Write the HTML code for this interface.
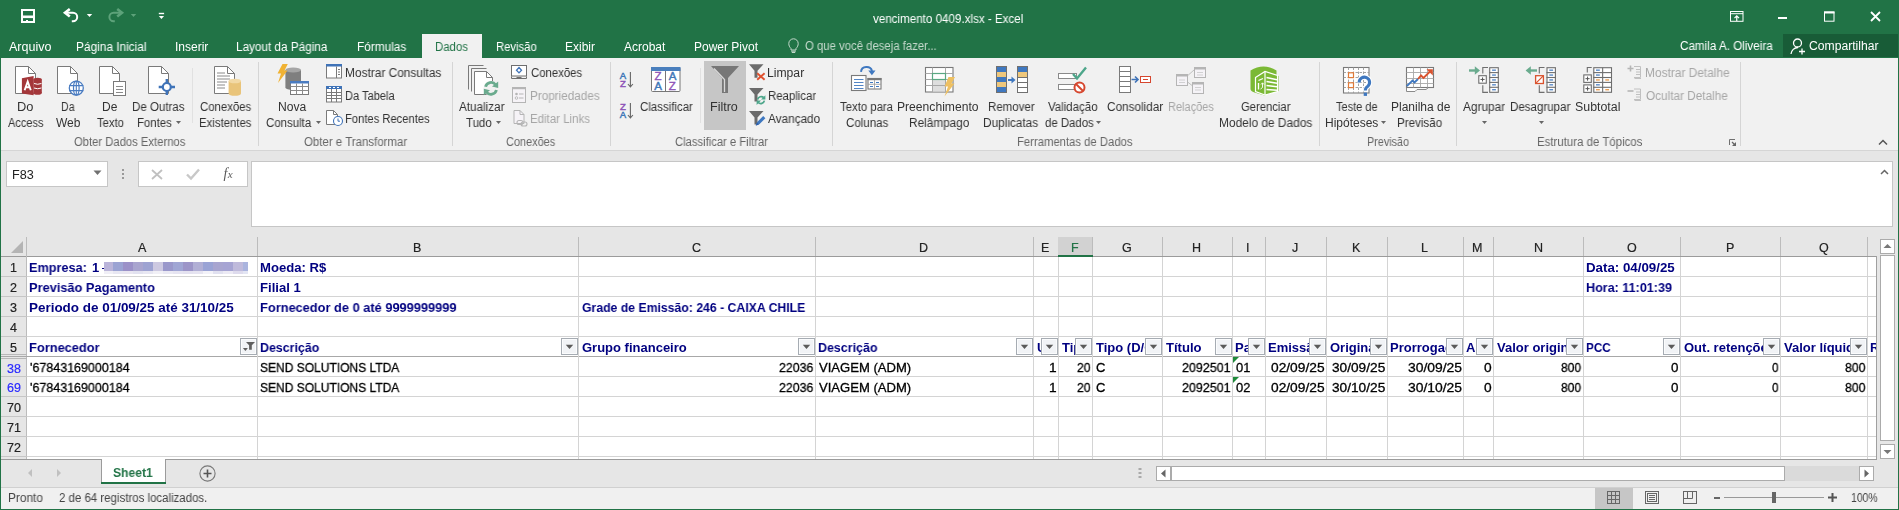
<!DOCTYPE html><html><head><meta charset="utf-8"><style>
html,body{margin:0;padding:0;}
body{width:1899px;height:510px;position:relative;overflow:hidden;background:#e6e6e6;font-family:'Liberation Sans', sans-serif;-webkit-font-smoothing:antialiased;}
.a{position:absolute;}
.t{white-space:pre;will-change:transform;}
svg{overflow:visible;}
</style></head><body><div class="a" style="left:0px;top:0px;width:1899px;height:58px;background:#217346;"></div>
<div class="a" style="left:422px;top:34px;width:60px;height:24px;background:#f1f1f1;"></div>
<div class="a" style="left:1783px;top:34px;width:115px;height:23px;background:#185c37;"></div>
<div class="a t" style="left:873.00px;top:-1px;line-height:40px;font-size:12px;font-weight:400;color:#fff;transform:scaleX(0.9671);transform-origin:0 0;">vencimento 0409.xlsx - Excel</div>
<div class="a t" style="left:9.00px;top:27px;line-height:40px;font-size:12px;font-weight:400;color:#fff;transform:scaleX(1.0437);transform-origin:0 0;">Arquivo</div>
<div class="a t" style="left:76.00px;top:27px;line-height:40px;font-size:12px;font-weight:400;color:#fff;transform:scaleX(0.9886);transform-origin:0 0;">Página Inicial</div>
<div class="a t" style="left:175.00px;top:27px;line-height:40px;font-size:12px;font-weight:400;color:#fff;transform:scaleX(0.9875);transform-origin:0 0;">Inserir</div>
<div class="a t" style="left:236.00px;top:27px;line-height:40px;font-size:12px;font-weight:400;color:#fff;transform:scaleX(0.9785);transform-origin:0 0;">Layout da Página</div>
<div class="a t" style="left:357.00px;top:27px;line-height:40px;font-size:12px;font-weight:400;color:#fff;transform:scaleX(0.9857);transform-origin:0 0;">Fórmulas</div>
<div class="a t" style="left:496.00px;top:27px;line-height:40px;font-size:12px;font-weight:400;color:#fff;transform:scaleX(0.9381);transform-origin:0 0;">Revisão</div>
<div class="a t" style="left:565.00px;top:27px;line-height:40px;font-size:12px;font-weight:400;color:#fff;transform:scaleX(0.9897);transform-origin:0 0;">Exibir</div>
<div class="a t" style="left:624.00px;top:27px;line-height:40px;font-size:12px;font-weight:400;color:#fff;">Acrobat</div>
<div class="a t" style="left:694.00px;top:27px;line-height:40px;font-size:12px;font-weight:400;color:#fff;transform:scaleX(0.9952);transform-origin:0 0;">Power Pivot</div>
<div class="a t" style="left:435.00px;top:27px;line-height:40px;font-size:12px;font-weight:400;color:#217346;transform:scaleX(0.9500);transform-origin:0 0;">Dados</div>
<div class="a t" style="left:805.00px;top:26px;line-height:40px;font-size:12px;font-weight:400;color:#c5d9cc;transform:scaleX(0.9446);transform-origin:0 0;">O que você deseja fazer...</div>
<div class="a t" style="left:1680.00px;top:26px;line-height:40px;font-size:12px;font-weight:400;color:#fff;transform:scaleX(0.9719);transform-origin:0 0;">Camila A. Oliveira</div>
<div class="a t" style="left:1809.00px;top:26px;line-height:40px;font-size:12px;font-weight:400;color:#fff;transform:scaleX(1.0116);transform-origin:0 0;">Compartilhar</div>
<div class="a" style="left:0px;top:58px;width:1899px;height:92px;background:#f1f1f1;"></div>
<div class="a" style="left:0px;top:150px;width:1899px;height:1px;background:#d5d5d5;"></div>
<div class="a" style="left:258px;top:62px;width:1px;height:84px;background:#d5d5d5;"></div>
<div class="a" style="left:452px;top:62px;width:1px;height:84px;background:#d5d5d5;"></div>
<div class="a" style="left:610px;top:62px;width:1px;height:84px;background:#d5d5d5;"></div>
<div class="a" style="left:832px;top:62px;width:1px;height:84px;background:#d5d5d5;"></div>
<div class="a" style="left:1319px;top:62px;width:1px;height:84px;background:#d5d5d5;"></div>
<div class="a" style="left:1456px;top:62px;width:1px;height:84px;background:#d5d5d5;"></div>
<div class="a" style="left:1740px;top:62px;width:1px;height:84px;background:#d5d5d5;"></div>
<div class="a" style="left:192px;top:68px;width:1px;height:55px;background:#e1e1e1;"></div>
<div class="a" style="left:700px;top:68px;width:1px;height:55px;background:#e1e1e1;"></div>
<svg class="a" style="left:21px;top:9px;" width="14" height="14" viewBox="0 0 14 14"><rect x="1" y="1" width="12" height="12" fill="none" stroke="#fff" stroke-width="2"/><rect x="1" y="6.5" width="12" height="2.6" fill="#fff"/><rect x="5" y="11" width="2" height="2" fill="#fff"/></svg>
<svg class="a" style="left:58px;top:4px;" width="40" height="20" viewBox="0 0 40 20"><path d="M11.8 5L7 8.8L11.8 12.6" fill="none" stroke="#fff" stroke-width="2.6"/><path d="M8 8.8H15A4.2 4.2 0 0 1 15 17.2H13.8" fill="none" stroke="#fff" stroke-width="2"/><path d="M28.8 10H34.2L31.5 13Z" fill="#fff"/></svg>
<svg class="a" style="left:104px;top:4px;" width="40" height="20" viewBox="0 0 40 20"><path d="M13.2 5L18 8.8L13.2 12.6" fill="none" stroke="#5da27a" stroke-width="2.6"/><path d="M17 8.8H9.6A4.2 4.2 0 0 0 9.6 17.2H10.8" fill="none" stroke="#5da27a" stroke-width="2"/><path d="M26.8 10H32.2L29.5 13Z" fill="#5da27a"/></svg>
<svg class="a" style="left:158px;top:12px;" width="7" height="8" viewBox="0 0 7 8"><rect x="0.8" y="0.8" width="5.3" height="1.4" fill="#fff"/><path d="M0.8 4H6.1L3.45 7.1Z" fill="#fff"/></svg>
<svg class="a" style="left:1730px;top:11px;" width="14" height="11" viewBox="0 0 14 11"><rect x="0.5" y="0.5" width="12.5" height="9.8" fill="none" stroke="#fff"/><path d="M0.5 2.7H13" stroke="#fff"/><path d="M6.75 10V5M4.5 7.2L6.75 4.8L9 7.2" fill="none" stroke="#fff" stroke-width="1.2"/></svg>
<div class="a" style="left:1778px;top:17px;width:9px;height:1.5px;background:#fff;"></div>
<svg class="a" style="left:1824px;top:11px;" width="11" height="11" viewBox="0 0 11 11"><rect x="0.5" y="1" width="9.5" height="9.2" fill="none" stroke="#fff"/><path d="M0 1.5H10.5" stroke="#fff" stroke-width="2"/></svg>
<svg class="a" style="left:1870px;top:11px;" width="11" height="11" viewBox="0 0 11 11"><path d="M1 1L10 10M10 1L1 10" stroke="#fff" stroke-width="1.8"/></svg>
<svg class="a" style="left:788px;top:37.5px;" width="11" height="15" viewBox="0 0 11 15"><path d="M3 10.5C1.5 9 0.8 7.5 0.8 5.5A4.7 4.7 0 0 1 10.2 5.5C10.2 7.5 9.5 9 8 10.5V12H3Z" fill="none" stroke="#c5d9cc" stroke-width="1"/><path d="M3.2 13.2H7.8M3.8 14.5H7.2" stroke="#c5d9cc" stroke-width="1"/></svg>
<svg class="a" style="left:1790px;top:38px;" width="16" height="17" viewBox="0 0 16 17"><circle cx="7.5" cy="5" r="4" fill="none" stroke="#fff" stroke-width="1.3"/><path d="M1 16A7 7 0 0 1 8 9.5" fill="none" stroke="#fff" stroke-width="1.3"/><path d="M12 10.5V16.5M9 13.5H15" stroke="#fff" stroke-width="1.3"/></svg>
<svg class="a" style="left:13px;top:64px;" width="32" height="34" viewBox="0 0 32 34"><path d="M2.5 2.5H15.5L22.5 9.5V29.5H2.5Z" fill="#fff" stroke="#7a7a7a"/><path d="M15.5 2.5V9.5H22.5" fill="none" stroke="#7a7a7a"/><path d="M8.9 14.2L20.6 12.1V31.2L8.9 29.6Z" fill="#a4373a"/><ellipse cx="24.6" cy="15.5" rx="4.2" ry="1.8" fill="#a4373a"/><rect x="20.4" y="15.5" width="8.4" height="13.5" fill="#a4373a"/><ellipse cx="24.6" cy="29" rx="4.2" ry="1.8" fill="#a4373a"/><path d="M21 19.5Q24.6 21 28.4 19.5M21 24Q24.6 25.5 28.4 24" fill="none" stroke="#fff" stroke-width="1"/><path d="M11.6 26.2L14.7 17.5L17.8 26.2M12.8 23.3H16.6" fill="none" stroke="#fff" stroke-width="1.9"/></svg>
<svg class="a" style="left:55px;top:64px;" width="32" height="34" viewBox="0 0 32 34"><path d="M2.5 2.5H15.5L22.5 9.5V29.5H2.5Z" fill="#fff" stroke="#7a7a7a"/><path d="M15.5 2.5V9.5H22.5" fill="none" stroke="#7a7a7a"/><circle cx="21.3" cy="24.1" r="7" fill="#fff" stroke="#4a7cc1" stroke-width="1.3"/><ellipse cx="21.3" cy="24.1" rx="2.8" ry="7" fill="none" stroke="#4a7cc1" stroke-width="1.2"/><path d="M14.3 21.6H28.3M14.3 26.6H28.3M21.3 17V31" fill="none" stroke="#4a7cc1" stroke-width="1.1"/></svg>
<svg class="a" style="left:97px;top:64px;" width="32" height="34" viewBox="0 0 32 34"><path d="M2.5 2.5H15.5L22.5 9.5V29.5H2.5Z" fill="#fff" stroke="#7a7a7a"/><path d="M15.5 2.5V9.5H22.5" fill="none" stroke="#7a7a7a"/><rect x="16.5" y="17.5" width="12" height="14" fill="#fff" stroke="#7a7a7a"/><path d="M19 22.5H26M19 25.5H26M19 28.5H26" stroke="#8a8a8a" stroke-width="1"/></svg>
<svg class="a" style="left:146px;top:64px;" width="32" height="34" viewBox="0 0 32 34"><path d="M2.5 2.5H15.5L22.5 9.5V29.5H2.5Z" fill="#fff" stroke="#7a7a7a"/><path d="M15.5 2.5V9.5H22.5" fill="none" stroke="#7a7a7a"/><circle cx="20.8" cy="23" r="4" fill="#fff" stroke="#3f73b8" stroke-width="2.2"/><path d="M12.7 23H16.8M24.8 23H29M20.8 15V19M20.8 27V31" stroke="#3f73b8" stroke-width="2.4"/></svg>
<svg class="a" style="left:212px;top:64px;" width="32" height="34" viewBox="0 0 32 34"><path d="M2.5 2.5H15.5L22.5 9.5V29.5H2.5Z" fill="#fff" stroke="#7a7a7a"/><path d="M15.5 2.5V9.5H22.5" fill="none" stroke="#7a7a7a"/><path d="M5 9H13M5 12H18M5 15H18M5 18H15M5 21H13M5 24H13" stroke="#8a8a8a" stroke-width="1"/><path d="M16.6 17V29.5A6.2 2.3 0 0 0 29 29.5V17Z" fill="#e9c47a"/><ellipse cx="22.8" cy="17" rx="6.2" ry="2.3" fill="#f2d9a5"/></svg>
<svg class="a" style="left:275px;top:63px;" width="34" height="34" viewBox="0 0 34 34"><path d="M10.4 7V24.5A7.8 2.6 0 0 0 26 24.5V7Z" fill="#7f7f7f"/><ellipse cx="18.2" cy="7" rx="7.8" ry="2.6" fill="#a6a6a6"/><path d="M7.5 1H12.8L9.5 7.5H12.5L3 20L6 10.5H2.5Z" fill="#f0b233"/><rect x="15.5" y="18.5" width="18" height="13" fill="#fff" stroke="#7a7a7a"/><rect x="15" y="18" width="19" height="2.5" fill="#4a7cc1"/><path d="M15.5 23.5H33.5M15.5 27.5H33.5M21.5 20.5V31.5M27.5 20.5V31.5" stroke="#8a8a8a" stroke-width="1"/></svg>
<svg class="a" style="left:466px;top:64px;" width="34" height="34" viewBox="0 0 34 34"><path d="M2.5 25.5V1.5H17.5" fill="none" stroke="#7a7a7a"/><path d="M5.5 27.5V4.5H20.5" fill="none" stroke="#7a7a7a"/><path d="M8.5 7.5H20.5L26.5 13.5V30.5H8.5Z" fill="#fff" stroke="#7a7a7a"/><path d="M20.5 7.5V13.5H26.5" fill="none" stroke="#7a7a7a"/><circle cx="25" cy="24.4" r="7.6" fill="#f1f1f1"/><path d="M19.6 22.8A5.6 5.6 0 0 1 29.6 20.8M30.4 26A5.6 5.6 0 0 1 20.4 28" fill="none" stroke="#6aab8e" stroke-width="2.8"/><path d="M32.2 17.6V24L26 22.6Z" fill="#6aab8e"/><path d="M17.8 31.2V24.8L24 26.2Z" fill="#6aab8e"/></svg>
<svg class="a" style="left:650px;top:66px;" width="32" height="27" viewBox="0 0 32 27"><rect x="1.5" y="1.5" width="28.5" height="24" rx="1" fill="#fff" stroke="#777"/><rect x="1" y="1" width="29.5" height="4" fill="#4a7fbd"/><path d="M15.5 5V25.5" stroke="#777"/><text x="8" y="13.8" font-size="11.5" font-family="Liberation Sans" text-anchor="middle" fill="#8e54b8" stroke="#8e54b8" stroke-width="0.45">Z</text><text x="8.2" y="23.7" font-size="11.5" font-family="Liberation Sans" text-anchor="middle" fill="#3f78b8" stroke="#3f78b8" stroke-width="0.45">A</text><text x="22.5" y="13.8" font-size="11.5" font-family="Liberation Sans" text-anchor="middle" fill="#3f78b8" stroke="#3f78b8" stroke-width="0.45">A</text><text x="22.3" y="23.7" font-size="11.5" font-family="Liberation Sans" text-anchor="middle" fill="#8e54b8" stroke="#8e54b8" stroke-width="0.45">Z</text></svg>
<svg class="a" style="left:619px;top:72px;" width="16" height="16" viewBox="0 0 16 16"><text x="4" y="6.8" font-size="9.6" font-family="Liberation Sans" text-anchor="middle" fill="#3f78b8" stroke="#3f78b8" stroke-width="0.45">A</text><text x="4" y="14.9" font-size="9.6" font-family="Liberation Sans" text-anchor="middle" fill="#8e54b8" stroke="#8e54b8" stroke-width="0.45">Z</text><path d="M11.4 0V14.5M8.9 12L11.4 14.8L13.9 12" fill="none" stroke="#666" stroke-width="1.1"/></svg>
<svg class="a" style="left:619px;top:103px;" width="16" height="16" viewBox="0 0 16 16"><text x="4" y="6.8" font-size="9.6" font-family="Liberation Sans" text-anchor="middle" fill="#8e54b8" stroke="#8e54b8" stroke-width="0.45">Z</text><text x="4" y="14.9" font-size="9.6" font-family="Liberation Sans" text-anchor="middle" fill="#3f78b8" stroke="#3f78b8" stroke-width="0.45">A</text><path d="M11.4 0V14.5M8.9 12L11.4 14.8L13.9 12" fill="none" stroke="#666" stroke-width="1.1"/></svg>
<div class="a" style="left:704px;top:61px;width:42px;height:69px;background:#c6c6c6;"></div>
<svg class="a" style="left:710px;top:65px;" width="30" height="29" viewBox="0 0 30 29"><path d="M1 1H29L18 13V28H12V13Z" fill="#777"/><path d="M4 3.5L14.5 14.5V27" fill="none" stroke="#d9d9d9" stroke-width="1.3"/></svg>
<svg class="a" style="left:749px;top:64px;" width="18" height="18" viewBox="0 0 18 18"><path d="M0 0.3H14.5L8.5 6.8V13.8H5.5V6.8Z" fill="#6b6b6b"/><path d="M8.2 9.2L15.6 15.8M15.6 9.2L8.2 15.8" stroke="#e0512f" stroke-width="1.9"/></svg>
<svg class="a" style="left:749px;top:88px;" width="18" height="18" viewBox="0 0 18 18"><path d="M0 0H14.5L8.5 6.5V13.5H5.5V6.5Z" fill="#6b6b6b"/><path d="M8.6 11.5A3.7 3.7 0 0 1 14.8 9.6M15.4 12.6A3.7 3.7 0 0 1 9.2 14.5" fill="none" stroke="#4da68a" stroke-width="1.7"/><path d="M16.4 7.2V11.6H12Z" fill="#4da68a"/><path d="M7.6 16.9V12.5H12Z" fill="#4da68a"/></svg>
<svg class="a" style="left:749px;top:111px;" width="18" height="18" viewBox="0 0 18 18"><path d="M0 0H14.5L8.5 6.5V13.5H5.5V6.5Z" fill="#6b6b6b"/><path d="M7 14.3L8.2 11L14.2 5L16.4 7.2L10.4 13.2Z" fill="#3f78c0"/><path d="M6.7 14.8L8 11.6L10 13.6Z" fill="#2d5fa8"/></svg>
<svg class="a" style="left:850px;top:65px;" width="33" height="28" viewBox="0 0 33 28"><path d="M11 6.8A5.6 5.2 0 0 1 22 6" fill="none" stroke="#3f78c0" stroke-width="2"/><path d="M18.3 5.5H25.5L21.9 10.3Z" fill="#3f78c0"/><rect x="1.5" y="10.5" width="14.5" height="15" fill="#fff" stroke="#7a7a7a" stroke-width="1.1"/><path d="M4 14.5H13.5M4 17.5H13.5M4 20.5H13.5M4 23.5H13.5" stroke="#3f78c0" stroke-width="0.9"/><rect x="18" y="13.5" width="13" height="10.5" fill="#fff" stroke="#7a7a7a" stroke-width="1.1"/><rect x="17.5" y="13" width="14" height="2.2" fill="#777"/><path d="M24.5 15V24M18 19.3H31" stroke="#9a9a9a" stroke-width="0.8"/><path d="M20 17.5H23M26 17.5H29M20 21.5H23M26 21.5H29" stroke="#3f78c0" stroke-width="1"/></svg>
<svg class="a" style="left:924px;top:66px;" width="33" height="31" viewBox="0 0 33 31"><rect x="1.5" y="1.5" width="27.5" height="24.5" fill="#fff" stroke="#7a7a7a" stroke-width="1.1"/><rect x="8.5" y="14" width="13" height="11.5" fill="#dedede"/><path d="M1.5 7.5H29M1.5 13.5H29M1.5 19.5H29M8.5 1.5V26M21.5 1.5V26" stroke="#a8a8a8" stroke-width="1"/><rect x="8.5" y="7.5" width="13" height="6" fill="#fff" stroke="#5aa882" stroke-width="1.2"/><path d="M24.5 11H31L27.5 17.5H30.5L20.5 30.5L24 20.5H20.5Z" fill="#eec062"/></svg>
<svg class="a" style="left:995px;top:65px;" width="34" height="29" viewBox="0 0 34 29"><rect x="1.5" y="1.5" width="10" height="26" fill="#3f78c0" stroke="#707070"/><rect x="2" y="7" width="9" height="5" fill="#eec77c"/><rect x="2" y="17" width="9" height="5" fill="#eec77c"/><path d="M13 15H18.5" stroke="#3f78c0" stroke-width="2"/><path d="M16.5 11.5L20.5 15L16.5 18.5Z" fill="#3f78c0"/><rect x="22.5" y="1.5" width="10" height="26" fill="#fff" stroke="#707070"/><rect x="23" y="2" width="9" height="5" fill="#3f78c0"/><rect x="23" y="7" width="9" height="5" fill="#eec77c"/><path d="M22.5 12.5H32.5M22.5 17.5H32.5M22.5 22.5H32.5" stroke="#707070" stroke-width="1"/></svg>
<svg class="a" style="left:1057px;top:66px;" width="32" height="28" viewBox="0 0 32 28"><rect x="1.5" y="7.5" width="18" height="5" fill="#fff" stroke="#8a8a8a"/><rect x="1.5" y="18.5" width="18" height="5" fill="#fff" stroke="#8a8a8a"/><path d="M16 8L20 12.5L29 1.5" fill="none" stroke="#4da68a" stroke-width="2.4"/><circle cx="22.5" cy="21.5" r="5" fill="#fff" stroke="#d6472f" stroke-width="2"/><path d="M19 18L26 25" stroke="#d6472f" stroke-width="2"/></svg>
<svg class="a" style="left:1118px;top:65px;" width="34" height="29" viewBox="0 0 34 29"><rect x="1.5" y="1.5" width="11" height="26" fill="#fff" stroke="#7a7a7a"/><path d="M1.5 6.5H12.5M1.5 11.5H12.5M1.5 16.5H12.5M1.5 21.5H12.5" stroke="#7a7a7a"/><path d="M13.5 14.5H19.5M17 11.5L20 14.5L17 17.5" fill="none" stroke="#3f73b8" stroke-width="1.6"/><rect x="22.5" y="11.5" width="10" height="6" fill="#fff" stroke="#d6472f"/><path d="M25 14.5H30" stroke="#d6472f"/></svg>
<svg class="a" style="left:1175px;top:66px;" width="33" height="30" viewBox="0 0 33 30"><path d="M10 12L19 4M10 14L19 21" stroke="#c0c0c0" stroke-width="1"/><rect x="1.5" y="8.5" width="11" height="11" fill="#f5f3f7" stroke="#b5b5b5"/><rect x="1" y="8" width="12" height="2.5" fill="#b5b5b5"/><rect x="19.5" y="1.5" width="11" height="10" fill="#f5f3f7" stroke="#b5b5b5"/><rect x="19" y="1" width="12" height="2.5" fill="#b5b5b5"/><rect x="17.5" y="16.5" width="11" height="11" fill="#f5f3f7" stroke="#b5b5b5"/><rect x="17" y="16" width="12" height="2.5" fill="#b5b5b5"/><path d="M4 14H10M4 16.5H10M22 6.5H28M22 9H28M20 21.5H26M20 24H26" stroke="#c8c8c8" stroke-width="0.8"/></svg>
<svg class="a" style="left:1250px;top:64px;" width="31" height="32" viewBox="0 0 31 32"><path d="M0.5 6.5Q13.5 -1.5 26.5 6.5V11L28.5 12V27L14.5 31.5L4.5 28.5Q0.5 27 0.5 25Z" fill="#7bb935"/><path d="M5.5 13.5L15 7.5L27.5 11.5V27.5L15 31L5.5 27.5Z" fill="#7bb935" stroke="#fff" stroke-width="1.2"/><path d="M15 7.5V31" stroke="#fff" stroke-width="1.2"/><path d="M16.5 13.5L27 15.8M16.5 17.5L27 19.3M16.5 21.5L27 22.8M16.5 25.5L27 26.2" stroke="#fff" stroke-width="1.6"/><path d="M8.5 16.5L13 14.5" stroke="#fff" stroke-width="1.2"/><path d="M8.5 19V25.5" stroke="#fff" stroke-width="1.3"/><path d="M10.5 25L12.5 23.5V19M11 20.5L12.5 18.8L14 20.5" fill="none" stroke="#fff" stroke-width="0.9"/></svg>
<svg class="a" style="left:1342px;top:66px;" width="31" height="31" viewBox="0 0 31 31"><rect x="1.5" y="1.5" width="25.5" height="25.5" fill="#fff" stroke="#7a7a7a" stroke-width="1.1"/><path d="M1.5 6.5H27M1.5 11.5H27M1.5 16.5H27M1.5 21.5H27M6.5 1.5V27M11.5 1.5V27M16.5 1.5V27M21.5 1.5V27" stroke="#9a9a9a" stroke-width="0.9" stroke-dasharray="2.5 1.5"/><rect x="6.5" y="6.8" width="5" height="4.8" fill="#fff" stroke="#e07b39" stroke-width="1.2"/><rect x="6.5" y="16.8" width="5" height="4.8" fill="#fff" stroke="#e07b39" stroke-width="1.2"/><path d="M17.2 16.5A5.2 5.2 0 1 1 25.8 20.3C24 21.5 23.3 22.3 23.3 24.5" fill="none" stroke="#fff" stroke-width="5"/><path d="M17.2 16.5A5.2 5.2 0 1 1 25.8 20.3C24 21.5 23.3 22.3 23.3 24.5" fill="none" stroke="#3f78c0" stroke-width="3.1"/><rect x="21.7" y="26.6" width="3.3" height="3.3" fill="#3f78c0"/></svg>
<svg class="a" style="left:1405px;top:66px;" width="31" height="27" viewBox="0 0 31 27"><path d="M1.5 21.5V25.5H10L12 23.5H21L23.5 21.5" fill="#fff" stroke="#8a8a8a"/><rect x="1.5" y="1.5" width="27" height="20" fill="#fff" stroke="#7a7a7a" stroke-width="1.1"/><path d="M1.5 6.5H28.5M1.5 12.5H28.5M1.5 17.5H28.5M8.5 1.5V21.5M15.5 1.5V21.5M22.5 1.5V21.5" stroke="#a8a8a8" stroke-width="0.9"/><path d="M1.8 20.2L7.5 14.5L9.5 16.5L13 13" fill="none" stroke="#3f78c0" stroke-width="1.9"/><path d="M13 13L16 9.5L18.5 12L25.5 5" fill="none" stroke="#d9532f" stroke-width="1.9"/><path d="M21.5 3.2H27.8V9.5Z" fill="#d9532f"/></svg>
<svg class="a" style="left:1468px;top:65px;" width="32" height="30" viewBox="0 0 32 30"><path d="M1 5.5H9" stroke="#6aab8e" stroke-width="2.4"/><path d="M6.8 1.2L12 5.5L6.8 9.8Z" fill="#6aab8e"/><path d="M20 2.5H14.8V8.6M14.8 20.2V27.4H20" fill="none" stroke="#6e6e6e" stroke-width="1.1"/><rect x="10.8" y="10.7" width="7.5" height="7.5" fill="#fff" stroke="#6e6e6e" stroke-width="1.1"/><path d="M14.55 12.399999999999999V16.5M12.5 14.45H16.6" stroke="#555" stroke-width="1"/><rect x="21.7" y="2.7" width="8.600000000000001" height="24.6" fill="#fff" stroke="#6e6e6e" stroke-width="1.1"/><path d="M21.2 7.6H30.8" stroke="#6e6e6e" stroke-width="1.1"/><path d="M21.2 12.5H30.8" stroke="#6e6e6e" stroke-width="1.1"/><path d="M21.2 17.4H30.8" stroke="#6e6e6e" stroke-width="1.1"/><path d="M21.2 22.3H30.8" stroke="#6e6e6e" stroke-width="1.1"/><path d="M24.1 5.15H27.9" stroke="#3f78c0" stroke-width="1.2"/><path d="M24.1 10.05H27.9" stroke="#3f78c0" stroke-width="1.2"/><path d="M24.1 14.95H27.9" stroke="#3f78c0" stroke-width="1.2"/><path d="M24.1 19.85H27.9" stroke="#3f78c0" stroke-width="1.2"/><path d="M24.1 24.75H27.9" stroke="#3f78c0" stroke-width="1.2"/></svg>
<svg class="a" style="left:1525px;top:65px;" width="32" height="30" viewBox="0 0 32 30"><path d="M4 5.5H12" stroke="#6aab8e" stroke-width="2.4"/><path d="M5.8 1.2L0.6 5.5L5.8 9.8Z" fill="#6aab8e"/><path d="M19.5 2.5H14.3V8.6M14.3 20.2V27.4H19.5" fill="none" stroke="#6e6e6e" stroke-width="1.1"/><rect x="10.6" y="10.7" width="7.8" height="7.8" fill="#fff" stroke="#d9532f" stroke-width="1.3"/><path d="M11 18.1L18 11.1" stroke="#d9532f" stroke-width="1.3"/><rect x="22.0" y="2.7" width="8.399999999999999" height="24.6" fill="#fff" stroke="#6e6e6e" stroke-width="1.1"/><path d="M21.5 7.6H30.9" stroke="#6e6e6e" stroke-width="1.1"/><path d="M21.5 12.5H30.9" stroke="#6e6e6e" stroke-width="1.1"/><path d="M21.5 17.4H30.9" stroke="#6e6e6e" stroke-width="1.1"/><path d="M21.5 22.3H30.9" stroke="#6e6e6e" stroke-width="1.1"/><path d="M24.3 5.15H28.099999999999998" stroke="#3f78c0" stroke-width="1.2"/><path d="M24.3 10.05H28.099999999999998" stroke="#3f78c0" stroke-width="1.2"/><path d="M24.3 14.95H28.099999999999998" stroke="#3f78c0" stroke-width="1.2"/><path d="M24.3 19.85H28.099999999999998" stroke="#3f78c0" stroke-width="1.2"/><path d="M24.3 24.75H28.099999999999998" stroke="#3f78c0" stroke-width="1.2"/></svg>
<svg class="a" style="left:1582px;top:65px;" width="32" height="30" viewBox="0 0 32 30"><path d="M9.7 2.5H5.3V7.4" fill="none" stroke="#6e6e6e" stroke-width="1.1"/><rect x="1.8" y="9.9" width="7.5" height="7.5" fill="#fff" stroke="#6e6e6e" stroke-width="1.1"/><path d="M5.55 11.600000000000001V15.7M3.5 13.65H7.6" stroke="#555" stroke-width="1"/><rect x="1.8" y="19.9" width="7.5" height="7.5" fill="#fff" stroke="#6e6e6e" stroke-width="1.1"/><path d="M5.55 21.599999999999998V25.7M3.5 23.65H7.6" stroke="#555" stroke-width="1"/><rect x="11.8" y="2.7" width="17.7" height="24.6" fill="#fff" stroke="#6e6e6e" stroke-width="1.1"/><path d="M11.3 7.6H30" stroke="#6e6e6e" stroke-width="1.1"/><path d="M11.3 12.5H30" stroke="#6e6e6e" stroke-width="1.1"/><path d="M11.3 17.4H30" stroke="#6e6e6e" stroke-width="1.1"/><path d="M11.3 22.3H30" stroke="#6e6e6e" stroke-width="1.1"/><path d="M20.65 2.7V27.3" stroke="#6e6e6e" stroke-width="1.1"/><path d="M14.0 5.15H17.8" stroke="#3f78c0" stroke-width="1.2"/><path d="M14.0 10.05H17.8" stroke="#3f78c0" stroke-width="1.2"/><path d="M14.0 14.95H17.8" stroke="#e8913a" stroke-width="1.2"/><path d="M14.0 19.85H17.8" stroke="#3f78c0" stroke-width="1.2"/><path d="M14.0 24.75H17.8" stroke="#e8913a" stroke-width="1.2"/><path d="M23.3 14.95H27.099999999999998" stroke="#e8913a" stroke-width="1.2"/><path d="M23.3 24.75H27.099999999999998" stroke="#e8913a" stroke-width="1.2"/></svg>
<svg class="a" style="left:326px;top:64px;" width="16" height="15" viewBox="0 0 16 15"><rect x="0.5" y="0.5" width="15" height="13.5" fill="#fff" stroke="#7a7a7a"/><rect x="0" y="0" width="16" height="2.5" fill="#3f73b8"/><path d="M10.5 2.5V14" stroke="#7a7a7a"/><path d="M12 5.5H14M12 8H14M12 10.5H14" stroke="#7a7a7a"/></svg>
<svg class="a" style="left:326px;top:86px;" width="16" height="17" viewBox="0 0 16 17"><rect x="0.5" y="0.5" width="15" height="15.5" fill="#fff" stroke="#7a7a7a"/><rect x="0" y="0" width="16" height="3" fill="#3f73b8"/><path d="M0.5 6.5H15.5M0.5 9.5H15.5M0.5 12.5H15.5M5.5 3V16M10.5 3V16" stroke="#7a7a7a"/><path d="M3 1.5H5M7 1.5H9M11 1.5H13" stroke="#fff"/></svg>
<svg class="a" style="left:326px;top:110px;" width="17" height="16" viewBox="0 0 17 16"><path d="M0.5 0.5H7.5L11.5 4.5V14.5H0.5Z" fill="#fff" stroke="#7a7a7a"/><path d="M7.5 0.5V4.5H11.5" fill="none" stroke="#7a7a7a"/><circle cx="12" cy="11" r="4.5" fill="#fff" stroke="#3f73b8" stroke-width="1.1"/><path d="M12 8.5V11.2H14" fill="none" stroke="#3f73b8"/></svg>
<svg class="a" style="left:511px;top:65px;" width="16" height="14" viewBox="0 0 16 14"><rect x="0.5" y="0.5" width="15" height="10.5" fill="#fff" stroke="#6e6e6e"/><path d="M0.5 11.5V13.5H15.5V11.5M5.5 12.5H10.5" fill="none" stroke="#6e6e6e"/><path d="M8 2.5L10.5 5.2L8 7.9L5.5 5.2Z" fill="none" stroke="#3f73b8" stroke-width="1.3"/></svg>
<svg class="a" style="left:512px;top:87px;" width="15" height="17" viewBox="0 0 15 17"><rect x="0.5" y="0.5" width="13" height="15" fill="#f6f3f7" stroke="#b5b5b5"/><rect x="0" y="0" width="14" height="2.2" fill="#b5b5b5"/><circle cx="4.5" cy="7" r="1.3" fill="#b5b5b5"/><circle cx="4.5" cy="11" r="1.3" fill="none" stroke="#b5b5b5" stroke-width="0.9"/><path d="M7 7H11.5M7 11H11.5" stroke="#b5b5b5"/></svg>
<svg class="a" style="left:513px;top:110px;" width="16" height="17" viewBox="0 0 16 17"><path d="M1.0 0.5H7.0L11.0 4.5V13.5H1.0Z" fill="#f6f3f7" stroke="#b5b5b5"/><path d="M7.0 0.5V4.5H11.0" fill="none" stroke="#b5b5b5"/><rect x="4" y="10.5" width="6" height="4" rx="2" fill="none" stroke="#b5b5b5" stroke-width="1.1"/><rect x="8" y="12" width="6" height="4" rx="2" fill="none" stroke="#b5b5b5" stroke-width="1.1"/></svg>
<svg class="a" style="left:1627px;top:65px;" width="16" height="15" viewBox="0 0 16 15"><path d="M3.5 0.5V6.5M0.5 3.5H6.5" stroke="#b5b5b5" stroke-width="1.6"/><path d="M7 1.5H13.5V12.5H7" fill="none" stroke="#c0c0c0"/><path d="M9 4.5H14M9 7H14M9 9.5H14M7.5 13.5H14" stroke="#c0c0c0"/></svg>
<svg class="a" style="left:1627px;top:88px;" width="16" height="14" viewBox="0 0 16 14"><path d="M0.5 3H6.5" stroke="#b5b5b5" stroke-width="1.6"/><path d="M7 1H13.5V11.5H7" fill="none" stroke="#c0c0c0"/><path d="M9 4H14M9 6.5H14M9 9H14M7.5 12.5H14" stroke="#c0c0c0"/></svg>
<svg class="a" style="left:1729px;top:139px;" width="8" height="8" viewBox="0 0 8 8"><path d="M0.5 6V0.5H6" fill="none" stroke="#707070"/><path d="M7 3V7H3Z" fill="#666"/><path d="M3 3L6 6" stroke="#666" stroke-width="1.2"/></svg>
<svg class="a" style="left:1878px;top:139px;" width="10" height="7" viewBox="0 0 10 7"><path d="M1 5.5L5 1.5L9 5.5" fill="none" stroke="#555" stroke-width="1.5"/></svg>
<svg class="a" style="left:176px;top:121px;" width="5" height="3" viewBox="0 0 5 3"><path d="M0 0H5L2.5 3Z" fill="#666"/></svg>
<svg class="a" style="left:315.5px;top:121px;" width="5" height="3" viewBox="0 0 5 3"><path d="M0 0H5L2.5 3Z" fill="#666"/></svg>
<svg class="a" style="left:495.5px;top:121px;" width="5" height="3" viewBox="0 0 5 3"><path d="M0 0H5L2.5 3Z" fill="#666"/></svg>
<svg class="a" style="left:1096px;top:121px;" width="5" height="3" viewBox="0 0 5 3"><path d="M0 0H5L2.5 3Z" fill="#666"/></svg>
<svg class="a" style="left:1381px;top:121px;" width="5" height="3" viewBox="0 0 5 3"><path d="M0 0H5L2.5 3Z" fill="#666"/></svg>
<svg class="a" style="left:1481.5px;top:121px;" width="5" height="3" viewBox="0 0 5 3"><path d="M0 0H5L2.5 3Z" fill="#666"/></svg>
<svg class="a" style="left:1539px;top:121px;" width="5" height="3" viewBox="0 0 5 3"><path d="M0 0H5L2.5 3Z" fill="#666"/></svg>
<div class="a t" style="left:17.00px;top:87px;line-height:40px;font-size:12px;font-weight:400;color:#333;transform:scaleX(1.0714);transform-origin:0 0;">Do</div>
<div class="a t" style="left:8.00px;top:103px;line-height:40px;font-size:12px;font-weight:400;color:#333;transform:scaleX(0.9154);transform-origin:0 0;">Access</div>
<div class="a t" style="left:61.00px;top:87px;line-height:40px;font-size:12px;font-weight:400;color:#333;transform:scaleX(0.8867);transform-origin:0 0;">Da</div>
<div class="a t" style="left:56.00px;top:103px;line-height:40px;font-size:12px;font-weight:400;color:#333;transform:scaleX(0.9875);transform-origin:0 0;">Web</div>
<div class="a t" style="left:102.00px;top:87px;line-height:40px;font-size:12px;font-weight:400;color:#333;">De</div>
<div class="a t" style="left:97.00px;top:103px;line-height:40px;font-size:12px;font-weight:400;color:#333;transform:scaleX(0.9357);transform-origin:0 0;">Texto</div>
<div class="a t" style="left:132.00px;top:87px;line-height:40px;font-size:12px;font-weight:400;color:#333;transform:scaleX(0.9593);transform-origin:0 0;">De Outras</div>
<div class="a t" style="left:137.00px;top:103px;line-height:40px;font-size:12px;font-weight:400;color:#333;transform:scaleX(0.9472);transform-origin:0 0;">Fontes</div>
<div class="a t" style="left:200.00px;top:87px;line-height:40px;font-size:12px;font-weight:400;color:#333;transform:scaleX(0.9481);transform-origin:0 0;">Conexões</div>
<div class="a t" style="left:199.00px;top:103px;line-height:40px;font-size:12px;font-weight:400;color:#333;transform:scaleX(0.9481);transform-origin:0 0;">Existentes</div>
<div class="a t" style="left:278.00px;top:87px;line-height:40px;font-size:12px;font-weight:400;color:#333;transform:scaleX(1.0111);transform-origin:0 0;">Nova</div>
<div class="a t" style="left:266.00px;top:103px;line-height:40px;font-size:12px;font-weight:400;color:#333;transform:scaleX(0.9542);transform-origin:0 0;">Consulta</div>
<div class="a t" style="left:459.00px;top:87px;line-height:40px;font-size:12px;font-weight:400;color:#333;transform:scaleX(0.9745);transform-origin:0 0;">Atualizar</div>
<div class="a t" style="left:466.00px;top:103px;line-height:40px;font-size:12px;font-weight:400;color:#333;transform:scaleX(0.9556);transform-origin:0 0;">Tudo</div>
<div class="a t" style="left:840.00px;top:87px;line-height:40px;font-size:12px;font-weight:400;color:#333;transform:scaleX(0.9464);transform-origin:0 0;">Texto para</div>
<div class="a t" style="left:846.00px;top:103px;line-height:40px;font-size:12px;font-weight:400;color:#333;transform:scaleX(0.9614);transform-origin:0 0;">Colunas</div>
<div class="a t" style="left:897.00px;top:87px;line-height:40px;font-size:12px;font-weight:400;color:#333;transform:scaleX(1.0101);transform-origin:0 0;">Preenchimento</div>
<div class="a t" style="left:909.00px;top:103px;line-height:40px;font-size:12px;font-weight:400;color:#333;transform:scaleX(0.9833);transform-origin:0 0;">Relâmpago</div>
<div class="a t" style="left:988.00px;top:87px;line-height:40px;font-size:12px;font-weight:400;color:#333;transform:scaleX(0.9583);transform-origin:0 0;">Remover</div>
<div class="a t" style="left:983.00px;top:103px;line-height:40px;font-size:12px;font-weight:400;color:#333;transform:scaleX(0.9855);transform-origin:0 0;">Duplicatas</div>
<div class="a t" style="left:1048.00px;top:87px;line-height:40px;font-size:12px;font-weight:400;color:#333;transform:scaleX(0.9558);transform-origin:0 0;">Validação</div>
<div class="a t" style="left:1045.00px;top:103px;line-height:40px;font-size:12px;font-weight:400;color:#333;transform:scaleX(0.9490);transform-origin:0 0;">de Dados</div>
<div class="a t" style="left:1241.00px;top:87px;line-height:40px;font-size:12px;font-weight:400;color:#333;transform:scaleX(0.9377);transform-origin:0 0;">Gerenciar</div>
<div class="a t" style="left:1219.00px;top:103px;line-height:40px;font-size:12px;font-weight:400;color:#333;transform:scaleX(0.9925);transform-origin:0 0;">Modelo de Dados</div>
<div class="a t" style="left:1336.00px;top:87px;line-height:40px;font-size:12px;font-weight:400;color:#333;transform:scaleX(0.9156);transform-origin:0 0;">Teste de</div>
<div class="a t" style="left:1325.00px;top:103px;line-height:40px;font-size:12px;font-weight:400;color:#333;transform:scaleX(0.9923);transform-origin:0 0;">Hipóteses</div>
<div class="a t" style="left:1391.00px;top:87px;line-height:40px;font-size:12px;font-weight:400;color:#333;transform:scaleX(0.9948);transform-origin:0 0;">Planilha de</div>
<div class="a t" style="left:1397.00px;top:103px;line-height:40px;font-size:12px;font-weight:400;color:#333;transform:scaleX(0.9667);transform-origin:0 0;">Previsão</div>
<div class="a t" style="left:640.00px;top:87px;line-height:40px;font-size:12px;font-weight:400;color:#333;transform:scaleX(0.9545);transform-origin:0 0;">Classificar</div>
<div class="a t" style="left:710.00px;top:87px;line-height:40px;font-size:12px;font-weight:400;color:#333;transform:scaleX(1.0440);transform-origin:0 0;">Filtro</div>
<div class="a t" style="left:1107.00px;top:87px;line-height:40px;font-size:12px;font-weight:400;color:#333;transform:scaleX(0.9807);transform-origin:0 0;">Consolidar</div>
<div class="a t" style="left:1168.00px;top:87px;line-height:40px;font-size:12px;font-weight:400;color:#a6a6a6;transform:scaleX(0.9163);transform-origin:0 0;">Relações</div>
<div class="a t" style="left:1463.00px;top:87px;line-height:40px;font-size:12px;font-weight:400;color:#333;transform:scaleX(0.9860);transform-origin:0 0;">Agrupar</div>
<div class="a t" style="left:1510.00px;top:87px;line-height:40px;font-size:12px;font-weight:400;color:#333;transform:scaleX(0.9613);transform-origin:0 0;">Desagrupar</div>
<div class="a t" style="left:1575.00px;top:87px;line-height:40px;font-size:12px;font-weight:400;color:#333;transform:scaleX(1.0310);transform-origin:0 0;">Subtotal</div>
<div class="a t" style="left:345.00px;top:53px;line-height:40px;font-size:12px;font-weight:400;color:#333;transform:scaleX(0.9906);transform-origin:0 0;">Mostrar Consultas</div>
<div class="a t" style="left:345.00px;top:76px;line-height:40px;font-size:12px;font-weight:400;color:#333;transform:scaleX(0.9208);transform-origin:0 0;">Da Tabela</div>
<div class="a t" style="left:345.00px;top:99px;line-height:40px;font-size:12px;font-weight:400;color:#333;transform:scaleX(0.9333);transform-origin:0 0;">Fontes Recentes</div>
<div class="a t" style="left:531.00px;top:53px;line-height:40px;font-size:12px;font-weight:400;color:#333;transform:scaleX(0.9463);transform-origin:0 0;">Conexões</div>
<div class="a t" style="left:530.00px;top:76px;line-height:40px;font-size:12px;font-weight:400;color:#a6a6a6;transform:scaleX(0.9757);transform-origin:0 0;">Propriedades</div>
<div class="a t" style="left:530.00px;top:99px;line-height:40px;font-size:12px;font-weight:400;color:#a6a6a6;transform:scaleX(0.9565);transform-origin:0 0;">Editar Links</div>
<div class="a t" style="left:767.00px;top:53px;line-height:40px;font-size:12px;font-weight:400;color:#333;transform:scaleX(1.0139);transform-origin:0 0;">Limpar</div>
<div class="a t" style="left:768.00px;top:76px;line-height:40px;font-size:12px;font-weight:400;color:#333;transform:scaleX(0.9500);transform-origin:0 0;">Reaplicar</div>
<div class="a t" style="left:768.00px;top:99px;line-height:40px;font-size:12px;font-weight:400;color:#333;transform:scaleX(0.9811);transform-origin:0 0;">Avançado</div>
<div class="a t" style="left:1645.00px;top:53px;line-height:40px;font-size:12px;font-weight:400;color:#a6a6a6;transform:scaleX(0.9917);transform-origin:0 0;">Mostrar Detalhe</div>
<div class="a t" style="left:1646.00px;top:76px;line-height:40px;font-size:12px;font-weight:400;color:#a6a6a6;transform:scaleX(0.9807);transform-origin:0 0;">Ocultar Detalhe</div>
<div class="a t" style="left:74.00px;top:122px;line-height:40px;font-size:12px;font-weight:400;color:#666;transform:scaleX(0.9378);transform-origin:0 0;">Obter Dados Externos</div>
<div class="a t" style="left:304.00px;top:122px;line-height:40px;font-size:12px;font-weight:400;color:#666;transform:scaleX(0.9556);transform-origin:0 0;">Obter e Transformar</div>
<div class="a t" style="left:506.00px;top:122px;line-height:40px;font-size:12px;font-weight:400;color:#666;transform:scaleX(0.9111);transform-origin:0 0;">Conexões</div>
<div class="a t" style="left:675.00px;top:122px;line-height:40px;font-size:12px;font-weight:400;color:#666;transform:scaleX(0.9354);transform-origin:0 0;">Classificar e Filtrar</div>
<div class="a t" style="left:1017.00px;top:122px;line-height:40px;font-size:12px;font-weight:400;color:#666;transform:scaleX(0.9410);transform-origin:0 0;">Ferramentas de Dados</div>
<div class="a t" style="left:1367.00px;top:122px;line-height:40px;font-size:12px;font-weight:400;color:#666;transform:scaleX(0.9000);transform-origin:0 0;">Previsão</div>
<div class="a t" style="left:1537.00px;top:122px;line-height:40px;font-size:12px;font-weight:400;color:#666;transform:scaleX(0.9541);transform-origin:0 0;">Estrutura de Tópicos</div>
<div class="a" style="left:6px;top:161px;width:102px;height:26px;background:#fff;border:1px solid #c6c6c6;box-sizing:border-box;"></div>
<div class="a t" style="left:12.00px;top:155px;line-height:40px;font-size:12px;font-weight:400;color:#222;transform:scaleX(1.0526);transform-origin:0 0;">F83</div>
<div class="a" style="left:138px;top:161px;width:110px;height:26px;background:#fff;border:1px solid #c6c6c6;box-sizing:border-box;"></div>
<div class="a" style="left:251px;top:161px;width:1642px;height:66px;background:#fff;border:1px solid #c6c6c6;box-sizing:border-box;"></div>
<div class="a" style="left:27px;top:257px;width:1849px;height:202px;background:#fff;"></div>
<div class="a" style="left:27px;top:276px;width:1849px;height:1px;background:#d4d4d4;"></div>
<div class="a" style="left:27px;top:296px;width:1849px;height:1px;background:#d4d4d4;"></div>
<div class="a" style="left:27px;top:316px;width:1849px;height:1px;background:#d4d4d4;"></div>
<div class="a" style="left:27px;top:336px;width:1849px;height:1px;background:#d4d4d4;"></div>
<div class="a" style="left:27px;top:376px;width:1849px;height:1px;background:#d4d4d4;"></div>
<div class="a" style="left:27px;top:396px;width:1849px;height:1px;background:#d4d4d4;"></div>
<div class="a" style="left:27px;top:416px;width:1849px;height:1px;background:#d4d4d4;"></div>
<div class="a" style="left:27px;top:436px;width:1849px;height:1px;background:#d4d4d4;"></div>
<div class="a" style="left:27px;top:456px;width:1849px;height:1px;background:#d4d4d4;"></div>
<div class="a" style="left:27px;top:356px;width:1849px;height:1px;background:#a8a8a8;"></div>
<div class="a" style="left:257px;top:257px;width:1px;height:202px;background:#d4d4d4;"></div>
<div class="a" style="left:578px;top:257px;width:1px;height:202px;background:#d4d4d4;"></div>
<div class="a" style="left:815px;top:257px;width:1px;height:202px;background:#d4d4d4;"></div>
<div class="a" style="left:1033px;top:257px;width:1px;height:202px;background:#d4d4d4;"></div>
<div class="a" style="left:1058px;top:257px;width:1px;height:202px;background:#d4d4d4;"></div>
<div class="a" style="left:1092px;top:257px;width:1px;height:202px;background:#d4d4d4;"></div>
<div class="a" style="left:1162px;top:257px;width:1px;height:202px;background:#d4d4d4;"></div>
<div class="a" style="left:1232px;top:257px;width:1px;height:202px;background:#d4d4d4;"></div>
<div class="a" style="left:1265px;top:257px;width:1px;height:202px;background:#d4d4d4;"></div>
<div class="a" style="left:1326px;top:257px;width:1px;height:202px;background:#d4d4d4;"></div>
<div class="a" style="left:1387px;top:257px;width:1px;height:202px;background:#d4d4d4;"></div>
<div class="a" style="left:1463px;top:257px;width:1px;height:202px;background:#d4d4d4;"></div>
<div class="a" style="left:1493px;top:257px;width:1px;height:202px;background:#d4d4d4;"></div>
<div class="a" style="left:1583px;top:257px;width:1px;height:202px;background:#d4d4d4;"></div>
<div class="a" style="left:1680px;top:257px;width:1px;height:202px;background:#d4d4d4;"></div>
<div class="a" style="left:1780px;top:257px;width:1px;height:202px;background:#d4d4d4;"></div>
<div class="a" style="left:1867px;top:257px;width:1px;height:202px;background:#d4d4d4;"></div>
<div class="a" style="left:0px;top:256px;width:1876px;height:1px;background:#9b9b9b;"></div>
<div class="a" style="left:257px;top:237px;width:1px;height:19px;background:#bcbcbc;"></div>
<div class="a" style="left:578px;top:237px;width:1px;height:19px;background:#bcbcbc;"></div>
<div class="a" style="left:815px;top:237px;width:1px;height:19px;background:#bcbcbc;"></div>
<div class="a" style="left:1033px;top:237px;width:1px;height:19px;background:#bcbcbc;"></div>
<div class="a" style="left:1058px;top:237px;width:1px;height:19px;background:#bcbcbc;"></div>
<div class="a" style="left:1092px;top:237px;width:1px;height:19px;background:#bcbcbc;"></div>
<div class="a" style="left:1162px;top:237px;width:1px;height:19px;background:#bcbcbc;"></div>
<div class="a" style="left:1232px;top:237px;width:1px;height:19px;background:#bcbcbc;"></div>
<div class="a" style="left:1265px;top:237px;width:1px;height:19px;background:#bcbcbc;"></div>
<div class="a" style="left:1326px;top:237px;width:1px;height:19px;background:#bcbcbc;"></div>
<div class="a" style="left:1387px;top:237px;width:1px;height:19px;background:#bcbcbc;"></div>
<div class="a" style="left:1463px;top:237px;width:1px;height:19px;background:#bcbcbc;"></div>
<div class="a" style="left:1493px;top:237px;width:1px;height:19px;background:#bcbcbc;"></div>
<div class="a" style="left:1583px;top:237px;width:1px;height:19px;background:#bcbcbc;"></div>
<div class="a" style="left:1680px;top:237px;width:1px;height:19px;background:#bcbcbc;"></div>
<div class="a" style="left:1780px;top:237px;width:1px;height:19px;background:#bcbcbc;"></div>
<div class="a" style="left:1867px;top:237px;width:1px;height:19px;background:#bcbcbc;"></div>
<div class="a" style="left:26px;top:237px;width:1px;height:222px;background:#bcbcbc;"></div>
<div class="a" style="left:1058px;top:237px;width:34px;height:19px;background:#d2d2d2;"></div>
<div class="a" style="left:1058px;top:255px;width:35px;height:2px;background:#217346;"></div>
<div class="a" style="left:1876px;top:256px;width:1px;height:203px;background:#a0a0a0;"></div>
<div class="a" style="left:0px;top:459px;width:1877px;height:1px;background:#9b9b9b;"></div>
<div class="a t" style="left:138.00px;top:228px;line-height:40px;font-size:12.5px;font-weight:400;color:#222;-webkit-text-stroke:0.2px #222;">A</div>
<div class="a t" style="left:413.00px;top:228px;line-height:40px;font-size:12.5px;font-weight:400;color:#222;-webkit-text-stroke:0.2px #222;">B</div>
<div class="a t" style="left:692.00px;top:228px;line-height:40px;font-size:12.5px;font-weight:400;color:#222;-webkit-text-stroke:0.2px #222;">C</div>
<div class="a t" style="left:919.00px;top:228px;line-height:40px;font-size:12.5px;font-weight:400;color:#222;-webkit-text-stroke:0.2px #222;">D</div>
<div class="a t" style="left:1041.00px;top:228px;line-height:40px;font-size:12.5px;font-weight:400;color:#222;-webkit-text-stroke:0.2px #222;">E</div>
<div class="a t" style="left:1071.00px;top:228px;line-height:40px;font-size:12.5px;font-weight:400;color:#217346;-webkit-text-stroke:0.2px #217346;">F</div>
<div class="a t" style="left:1122.00px;top:228px;line-height:40px;font-size:12.5px;font-weight:400;color:#222;-webkit-text-stroke:0.2px #222;">G</div>
<div class="a t" style="left:1192.00px;top:228px;line-height:40px;font-size:12.5px;font-weight:400;color:#222;-webkit-text-stroke:0.2px #222;">H</div>
<div class="a t" style="left:1246.00px;top:228px;line-height:40px;font-size:12.5px;font-weight:400;color:#222;-webkit-text-stroke:0.2px #222;">I</div>
<div class="a t" style="left:1292.00px;top:228px;line-height:40px;font-size:12.5px;font-weight:400;color:#222;-webkit-text-stroke:0.2px #222;">J</div>
<div class="a t" style="left:1352.00px;top:228px;line-height:40px;font-size:12.5px;font-weight:400;color:#222;-webkit-text-stroke:0.2px #222;">K</div>
<div class="a t" style="left:1421.00px;top:228px;line-height:40px;font-size:12.5px;font-weight:400;color:#222;-webkit-text-stroke:0.2px #222;">L</div>
<div class="a t" style="left:1472.00px;top:228px;line-height:40px;font-size:12.5px;font-weight:400;color:#222;-webkit-text-stroke:0.2px #222;">M</div>
<div class="a t" style="left:1534.00px;top:228px;line-height:40px;font-size:12.5px;font-weight:400;color:#222;-webkit-text-stroke:0.2px #222;">N</div>
<div class="a t" style="left:1627.00px;top:228px;line-height:40px;font-size:12.5px;font-weight:400;color:#222;-webkit-text-stroke:0.2px #222;">O</div>
<div class="a t" style="left:1726.00px;top:228px;line-height:40px;font-size:12.5px;font-weight:400;color:#222;-webkit-text-stroke:0.2px #222;">P</div>
<div class="a t" style="left:1819.00px;top:228px;line-height:40px;font-size:12.5px;font-weight:400;color:#222;-webkit-text-stroke:0.2px #222;">Q</div>
<div class="a t" style="left:10.00px;top:248px;line-height:40px;font-size:12.5px;font-weight:400;color:#222;-webkit-text-stroke:0.2px #222;">1</div>
<div class="a t" style="left:10.00px;top:268px;line-height:40px;font-size:12.5px;font-weight:400;color:#222;-webkit-text-stroke:0.2px #222;">2</div>
<div class="a t" style="left:10.00px;top:288px;line-height:40px;font-size:12.5px;font-weight:400;color:#222;-webkit-text-stroke:0.2px #222;">3</div>
<div class="a t" style="left:10.00px;top:308px;line-height:40px;font-size:12.5px;font-weight:400;color:#222;-webkit-text-stroke:0.2px #222;">4</div>
<div class="a t" style="left:10.00px;top:328px;line-height:40px;font-size:12.5px;font-weight:400;color:#222;-webkit-text-stroke:0.2px #222;">5</div>
<div class="a t" style="left:7.00px;top:349px;line-height:40px;font-size:12.5px;font-weight:400;color:#2b2bff;-webkit-text-stroke:0.2px #2b2bff;">38</div>
<div class="a t" style="left:7.00px;top:368px;line-height:40px;font-size:12.5px;font-weight:400;color:#2b2bff;-webkit-text-stroke:0.2px #2b2bff;">69</div>
<div class="a t" style="left:7.00px;top:388px;line-height:40px;font-size:12.5px;font-weight:400;color:#222;-webkit-text-stroke:0.2px #222;">70</div>
<div class="a t" style="left:7.00px;top:408px;line-height:40px;font-size:12.5px;font-weight:400;color:#222;-webkit-text-stroke:0.2px #222;">71</div>
<div class="a t" style="left:7.00px;top:428px;line-height:40px;font-size:12.5px;font-weight:400;color:#222;-webkit-text-stroke:0.2px #222;">72</div>
<div class="a" style="left:1px;top:276px;width:26px;height:1px;background:#c6c6c6;"></div>
<div class="a" style="left:1px;top:296px;width:26px;height:1px;background:#c6c6c6;"></div>
<div class="a" style="left:1px;top:316px;width:26px;height:1px;background:#c6c6c6;"></div>
<div class="a" style="left:1px;top:336px;width:26px;height:1px;background:#c6c6c6;"></div>
<div class="a" style="left:1px;top:376px;width:26px;height:1px;background:#c6c6c6;"></div>
<div class="a" style="left:1px;top:396px;width:26px;height:1px;background:#c6c6c6;"></div>
<div class="a" style="left:1px;top:416px;width:26px;height:1px;background:#c6c6c6;"></div>
<div class="a" style="left:1px;top:436px;width:26px;height:1px;background:#c6c6c6;"></div>
<div class="a" style="left:1px;top:456px;width:26px;height:1px;background:#c6c6c6;"></div>
<div class="a" style="left:1px;top:354px;width:26px;height:1px;background:#b8b8b8;"></div>
<div class="a" style="left:1px;top:356px;width:26px;height:1px;background:#a8a8a8;"></div>
<div class="a" style="left:1px;top:358px;width:26px;height:1px;background:#b8b8b8;"></div>
<div class="a t" style="left:29.00px;top:248px;line-height:40px;font-size:13px;font-weight:700;color:#000080;transform:scaleX(0.9754);transform-origin:0 0;">Empresa:</div>
<div class="a t" style="left:92.00px;top:248px;line-height:40px;font-size:13px;font-weight:700;color:#000080;">1</div>
<div class="a" style="left:102px;top:268px;width:2px;height:1.3px;background:#000080;"></div>
<div class="a t" style="left:29.00px;top:268px;line-height:40px;font-size:13px;font-weight:700;color:#000080;transform:scaleX(0.9850);transform-origin:0 0;">Previsão Pagamento</div>
<div class="a t" style="left:29.00px;top:288px;line-height:40px;font-size:13px;font-weight:700;color:#000080;transform:scaleX(1.0340);transform-origin:0 0;">Periodo de 01/09/25 até 31/10/25</div>
<div class="a t" style="left:260.00px;top:248px;line-height:40px;font-size:13px;font-weight:700;color:#000080;transform:scaleX(1.0092);transform-origin:0 0;">Moeda: R$</div>
<div class="a t" style="left:260.00px;top:268px;line-height:40px;font-size:13px;font-weight:700;color:#000080;transform:scaleX(1.0077);transform-origin:0 0;">Filial 1</div>
<div class="a t" style="left:260.00px;top:288px;line-height:40px;font-size:13px;font-weight:700;color:#000080;transform:scaleX(0.9854);transform-origin:0 0;">Fornecedor de 0 até 9999999999</div>
<div class="a t" style="left:582.00px;top:288px;line-height:40px;font-size:13px;font-weight:700;color:#000080;transform:scaleX(0.9414);transform-origin:0 0;">Grade de Emissão: 246 - CAIXA CHILE</div>
<div class="a t" style="left:1586.00px;top:248px;line-height:40px;font-size:13px;font-weight:700;color:#000080;transform:scaleX(1.0233);transform-origin:0 0;">Data: 04/09/25</div>
<div class="a t" style="left:1586.00px;top:268px;line-height:40px;font-size:13px;font-weight:700;color:#000080;transform:scaleX(0.9670);transform-origin:0 0;">Hora: 11:01:39</div>
<div class="a" style="left:27.6px;top:337px;width:229.4px;height:19px;overflow:hidden"><div class="a t" style="left:1.40px;top:-9px;line-height:40px;font-size:13px;font-weight:700;color:#000080;transform:scaleX(0.9873);transform-origin:0 0;">Fornecedor</div></div>
<div class="a" style="left:258.4px;top:337px;width:319.6px;height:19px;overflow:hidden"><div class="a t" style="left:1.60px;top:-9px;line-height:40px;font-size:13px;font-weight:700;color:#000080;transform:scaleX(0.9541);transform-origin:0 0;">Descrição</div></div>
<div class="a" style="left:579.6px;top:337px;width:235.39999999999998px;height:19px;overflow:hidden"><div class="a t" style="left:2.40px;top:-9px;line-height:40px;font-size:13px;font-weight:700;color:#000080;">Grupo financeiro</div></div>
<div class="a" style="left:816.6px;top:337px;width:216.39999999999998px;height:19px;overflow:hidden"><div class="a t" style="left:1.40px;top:-9px;line-height:40px;font-size:13px;font-weight:700;color:#000080;transform:scaleX(0.9574);transform-origin:0 0;">Descrição</div></div>
<div class="a" style="left:1034.9px;top:337px;width:23.09999999999991px;height:19px;overflow:hidden"><div class="a t" style="left:2.10px;top:-9px;line-height:40px;font-size:13px;font-weight:700;color:#000080;">Unidade</div></div>
<div class="a" style="left:1059.4px;top:337px;width:32.59999999999991px;height:19px;overflow:hidden"><div class="a t" style="left:2.60px;top:-9px;line-height:40px;font-size:13px;font-weight:700;color:#000080;">Tipo</div></div>
<div class="a" style="left:1093px;top:337px;width:69px;height:19px;overflow:hidden"><div class="a t" style="left:3.00px;top:-9px;line-height:40px;font-size:13px;font-weight:700;color:#000080;">Tipo (D/C)</div></div>
<div class="a" style="left:1163.3px;top:337px;width:68.70000000000005px;height:19px;overflow:hidden"><div class="a t" style="left:2.70px;top:-9px;line-height:40px;font-size:13px;font-weight:700;color:#000080;transform:scaleX(1.0057);transform-origin:0 0;">Título</div></div>
<div class="a" style="left:1233.8px;top:337px;width:31.200000000000045px;height:19px;overflow:hidden"><div class="a t" style="left:1.20px;top:-9px;line-height:40px;font-size:13px;font-weight:700;color:#000080;">Parcela</div></div>
<div class="a" style="left:1266.5px;top:337px;width:59.5px;height:19px;overflow:hidden"><div class="a t" style="left:1.50px;top:-9px;line-height:40px;font-size:13px;font-weight:700;color:#000080;">Emissão</div></div>
<div class="a" style="left:1327.7px;top:337px;width:59.299999999999955px;height:19px;overflow:hidden"><div class="a t" style="left:2.30px;top:-9px;line-height:40px;font-size:13px;font-weight:700;color:#000080;">Original</div></div>
<div class="a" style="left:1388.4px;top:337px;width:74.59999999999991px;height:19px;overflow:hidden"><div class="a t" style="left:1.60px;top:-9px;line-height:40px;font-size:13px;font-weight:700;color:#000080;">Prorrogado</div></div>
<div class="a" style="left:1463.7px;top:337px;width:29.299999999999955px;height:19px;overflow:hidden"><div class="a t" style="left:2.30px;top:-9px;line-height:40px;font-size:13px;font-weight:700;color:#000080;">Abatimento</div></div>
<div class="a" style="left:1494.3px;top:337px;width:88.70000000000005px;height:19px;overflow:hidden"><div class="a t" style="left:2.70px;top:-9px;line-height:40px;font-size:13px;font-weight:700;color:#000080;">Valor original</div></div>
<div class="a" style="left:1584.4px;top:337px;width:95.59999999999991px;height:19px;overflow:hidden"><div class="a t" style="left:1.60px;top:-9px;line-height:40px;font-size:13px;font-weight:700;color:#000080;transform:scaleX(0.9000);transform-origin:0 0;">PCC</div></div>
<div class="a" style="left:1681.5px;top:337px;width:98.5px;height:19px;overflow:hidden"><div class="a t" style="left:2.50px;top:-9px;line-height:40px;font-size:13px;font-weight:700;color:#000080;">Out. retenções</div></div>
<div class="a" style="left:1781.3px;top:337px;width:85.70000000000005px;height:19px;overflow:hidden"><div class="a t" style="left:2.70px;top:-9px;line-height:40px;font-size:13px;font-weight:700;color:#000080;">Valor líquido</div></div>
<div class="a" style="left:1868.2px;top:337px;width:7.7999999999999545px;height:19px;overflow:hidden"><div class="a t" style="left:1.80px;top:-9px;line-height:40px;font-size:13px;font-weight:700;color:#000080;">Retenção</div></div>
<div class="a t" style="left:30.00px;top:348px;line-height:40px;font-size:13px;font-weight:400;color:#000;transform:scaleX(0.9606);transform-origin:0 0;-webkit-text-stroke:0.3px #000;">'67843169000184</div>
<div class="a t" style="left:260.00px;top:348px;line-height:40px;font-size:13px;font-weight:400;color:#000;transform:scaleX(0.9240);transform-origin:0 0;-webkit-text-stroke:0.3px #000;">SEND SOLUTIONS LTDA</div>
<div class="a t" style="left:779.00px;top:348px;line-height:40px;font-size:13px;font-weight:400;color:#000;transform:scaleX(0.9472);transform-origin:0 0;-webkit-text-stroke:0.3px #000;">22036</div>
<div class="a t" style="left:819.00px;top:348px;line-height:40px;font-size:13px;font-weight:400;color:#000;transform:scaleX(1.0044);transform-origin:0 0;-webkit-text-stroke:0.3px #000;">VIAGEM (ADM)</div>
<div class="a t" style="left:1049.00px;top:348px;line-height:40px;font-size:13px;font-weight:400;color:#000;transform:scaleX(1.0500);transform-origin:0 0;-webkit-text-stroke:0.3px #000;">1</div>
<div class="a t" style="left:1077.00px;top:348px;line-height:40px;font-size:13px;font-weight:400;color:#000;transform:scaleX(0.9357);transform-origin:0 0;-webkit-text-stroke:0.3px #000;">20</div>
<div class="a t" style="left:1096.00px;top:348px;line-height:40px;font-size:13px;font-weight:400;color:#000;-webkit-text-stroke:0.3px #000;">C</div>
<div class="a t" style="left:1182.00px;top:348px;line-height:40px;font-size:13px;font-weight:400;color:#000;transform:scaleX(0.9580);transform-origin:0 0;-webkit-text-stroke:0.3px #000;">2092501</div>
<div class="a t" style="left:1236.00px;top:348px;line-height:40px;font-size:13px;font-weight:400;color:#000;transform:scaleX(0.9929);transform-origin:0 0;-webkit-text-stroke:0.3px #000;">01</div>
<div class="a t" style="left:1271.00px;top:348px;line-height:40px;font-size:13px;font-weight:400;color:#000;transform:scaleX(1.0580);transform-origin:0 0;-webkit-text-stroke:0.3px #000;">02/09/25</div>
<div class="a t" style="left:1332.00px;top:348px;line-height:40px;font-size:13px;font-weight:400;color:#000;transform:scaleX(1.0520);transform-origin:0 0;-webkit-text-stroke:0.3px #000;">30/09/25</div>
<div class="a t" style="left:1408.00px;top:348px;line-height:40px;font-size:13px;font-weight:400;color:#000;transform:scaleX(1.0680);transform-origin:0 0;-webkit-text-stroke:0.3px #000;">30/09/25</div>
<div class="a t" style="left:1484.00px;top:348px;line-height:40px;font-size:13px;font-weight:400;color:#000;transform:scaleX(1.0571);transform-origin:0 0;-webkit-text-stroke:0.3px #000;">0</div>
<div class="a t" style="left:1561.00px;top:348px;line-height:40px;font-size:13px;font-weight:400;color:#000;transform:scaleX(0.9227);transform-origin:0 0;-webkit-text-stroke:0.3px #000;">800</div>
<div class="a t" style="left:1671.00px;top:348px;line-height:40px;font-size:13px;font-weight:400;color:#000;transform:scaleX(1.0286);transform-origin:0 0;-webkit-text-stroke:0.3px #000;">0</div>
<div class="a t" style="left:1772.00px;top:348px;line-height:40px;font-size:13px;font-weight:400;color:#000;transform:scaleX(0.9000);transform-origin:0 0;-webkit-text-stroke:0.3px #000;">0</div>
<div class="a t" style="left:1845.00px;top:348px;line-height:40px;font-size:13px;font-weight:400;color:#000;transform:scaleX(0.9409);transform-origin:0 0;-webkit-text-stroke:0.3px #000;">800</div>
<svg class="a" style="left:1233px;top:357px;" width="6" height="6" viewBox="0 0 6 6"><path d="M0 0H6L0 6Z" fill="#1f8b3b"/></svg>
<div class="a t" style="left:30.00px;top:368px;line-height:40px;font-size:13px;font-weight:400;color:#000;transform:scaleX(0.9606);transform-origin:0 0;-webkit-text-stroke:0.3px #000;">'67843169000184</div>
<div class="a t" style="left:260.00px;top:368px;line-height:40px;font-size:13px;font-weight:400;color:#000;transform:scaleX(0.9240);transform-origin:0 0;-webkit-text-stroke:0.3px #000;">SEND SOLUTIONS LTDA</div>
<div class="a t" style="left:779.00px;top:368px;line-height:40px;font-size:13px;font-weight:400;color:#000;transform:scaleX(0.9472);transform-origin:0 0;-webkit-text-stroke:0.3px #000;">22036</div>
<div class="a t" style="left:819.00px;top:368px;line-height:40px;font-size:13px;font-weight:400;color:#000;transform:scaleX(1.0044);transform-origin:0 0;-webkit-text-stroke:0.3px #000;">VIAGEM (ADM)</div>
<div class="a t" style="left:1049.00px;top:368px;line-height:40px;font-size:13px;font-weight:400;color:#000;transform:scaleX(1.0500);transform-origin:0 0;-webkit-text-stroke:0.3px #000;">1</div>
<div class="a t" style="left:1077.00px;top:368px;line-height:40px;font-size:13px;font-weight:400;color:#000;transform:scaleX(0.9357);transform-origin:0 0;-webkit-text-stroke:0.3px #000;">20</div>
<div class="a t" style="left:1096.00px;top:368px;line-height:40px;font-size:13px;font-weight:400;color:#000;-webkit-text-stroke:0.3px #000;">C</div>
<div class="a t" style="left:1182.00px;top:368px;line-height:40px;font-size:13px;font-weight:400;color:#000;transform:scaleX(0.9580);transform-origin:0 0;-webkit-text-stroke:0.3px #000;">2092501</div>
<div class="a t" style="left:1236.00px;top:368px;line-height:40px;font-size:13px;font-weight:400;color:#000;transform:scaleX(0.9929);transform-origin:0 0;-webkit-text-stroke:0.3px #000;">02</div>
<div class="a t" style="left:1271.00px;top:368px;line-height:40px;font-size:13px;font-weight:400;color:#000;transform:scaleX(1.0580);transform-origin:0 0;-webkit-text-stroke:0.3px #000;">02/09/25</div>
<div class="a t" style="left:1332.00px;top:368px;line-height:40px;font-size:13px;font-weight:400;color:#000;transform:scaleX(1.0520);transform-origin:0 0;-webkit-text-stroke:0.3px #000;">30/10/25</div>
<div class="a t" style="left:1408.00px;top:368px;line-height:40px;font-size:13px;font-weight:400;color:#000;transform:scaleX(1.0680);transform-origin:0 0;-webkit-text-stroke:0.3px #000;">30/10/25</div>
<div class="a t" style="left:1484.00px;top:368px;line-height:40px;font-size:13px;font-weight:400;color:#000;transform:scaleX(1.0571);transform-origin:0 0;-webkit-text-stroke:0.3px #000;">0</div>
<div class="a t" style="left:1561.00px;top:368px;line-height:40px;font-size:13px;font-weight:400;color:#000;transform:scaleX(0.9227);transform-origin:0 0;-webkit-text-stroke:0.3px #000;">800</div>
<div class="a t" style="left:1671.00px;top:368px;line-height:40px;font-size:13px;font-weight:400;color:#000;transform:scaleX(1.0286);transform-origin:0 0;-webkit-text-stroke:0.3px #000;">0</div>
<div class="a t" style="left:1772.00px;top:368px;line-height:40px;font-size:13px;font-weight:400;color:#000;transform:scaleX(0.9000);transform-origin:0 0;-webkit-text-stroke:0.3px #000;">0</div>
<div class="a t" style="left:1845.00px;top:368px;line-height:40px;font-size:13px;font-weight:400;color:#000;transform:scaleX(0.9409);transform-origin:0 0;-webkit-text-stroke:0.3px #000;">800</div>
<svg class="a" style="left:1233px;top:377px;" width="6" height="6" viewBox="0 0 6 6"><path d="M0 0H6L0 6Z" fill="#1f8b3b"/></svg>
<div class="a" style="left:240px;top:338px;width:17px;height:17px;background:#f1f3f6;border:1px solid #a6acb3;box-sizing:border-box;box-shadow:inset 0 0 0 1px #fbfcfd;"></div>
<svg class="a" style="left:240px;top:338px;" width="17" height="17" viewBox="0 0 17 17"><path d="M6 4H15L11.8 7.3V11.8H9.1V7.3Z" fill="#5f5f5f"/><path d="M2.9 10H7.9L5.4 13Z" fill="#5f5f5f"/></svg>
<div class="a" style="left:561px;top:338px;width:17px;height:17px;background:#f1f3f6;border:1px solid #a6acb3;box-sizing:border-box;box-shadow:inset 0 0 0 1px #fbfcfd;"></div>
<svg class="a" style="left:561px;top:338px;" width="17" height="17" viewBox="0 0 17 17"><path d="M4.8 6.8H12.2L8.5 10.9Z" fill="#5a5a5a"/></svg>
<div class="a" style="left:798px;top:338px;width:17px;height:17px;background:#f1f3f6;border:1px solid #a6acb3;box-sizing:border-box;box-shadow:inset 0 0 0 1px #fbfcfd;"></div>
<svg class="a" style="left:798px;top:338px;" width="17" height="17" viewBox="0 0 17 17"><path d="M4.8 6.8H12.2L8.5 10.9Z" fill="#5a5a5a"/></svg>
<div class="a" style="left:1016px;top:338px;width:17px;height:17px;background:#f1f3f6;border:1px solid #a6acb3;box-sizing:border-box;box-shadow:inset 0 0 0 1px #fbfcfd;"></div>
<svg class="a" style="left:1016px;top:338px;" width="17" height="17" viewBox="0 0 17 17"><path d="M4.8 6.8H12.2L8.5 10.9Z" fill="#5a5a5a"/></svg>
<div class="a" style="left:1041px;top:338px;width:17px;height:17px;background:#f1f3f6;border:1px solid #a6acb3;box-sizing:border-box;box-shadow:inset 0 0 0 1px #fbfcfd;"></div>
<svg class="a" style="left:1041px;top:338px;" width="17" height="17" viewBox="0 0 17 17"><path d="M4.8 6.8H12.2L8.5 10.9Z" fill="#5a5a5a"/></svg>
<div class="a" style="left:1075px;top:338px;width:17px;height:17px;background:#f1f3f6;border:1px solid #a6acb3;box-sizing:border-box;box-shadow:inset 0 0 0 1px #fbfcfd;"></div>
<svg class="a" style="left:1075px;top:338px;" width="17" height="17" viewBox="0 0 17 17"><path d="M4.8 6.8H12.2L8.5 10.9Z" fill="#5a5a5a"/></svg>
<div class="a" style="left:1145px;top:338px;width:17px;height:17px;background:#f1f3f6;border:1px solid #a6acb3;box-sizing:border-box;box-shadow:inset 0 0 0 1px #fbfcfd;"></div>
<svg class="a" style="left:1145px;top:338px;" width="17" height="17" viewBox="0 0 17 17"><path d="M4.8 6.8H12.2L8.5 10.9Z" fill="#5a5a5a"/></svg>
<div class="a" style="left:1215px;top:338px;width:17px;height:17px;background:#f1f3f6;border:1px solid #a6acb3;box-sizing:border-box;box-shadow:inset 0 0 0 1px #fbfcfd;"></div>
<svg class="a" style="left:1215px;top:338px;" width="17" height="17" viewBox="0 0 17 17"><path d="M4.8 6.8H12.2L8.5 10.9Z" fill="#5a5a5a"/></svg>
<div class="a" style="left:1248px;top:338px;width:17px;height:17px;background:#f1f3f6;border:1px solid #a6acb3;box-sizing:border-box;box-shadow:inset 0 0 0 1px #fbfcfd;"></div>
<svg class="a" style="left:1248px;top:338px;" width="17" height="17" viewBox="0 0 17 17"><path d="M4.8 6.8H12.2L8.5 10.9Z" fill="#5a5a5a"/></svg>
<div class="a" style="left:1309px;top:338px;width:17px;height:17px;background:#f1f3f6;border:1px solid #a6acb3;box-sizing:border-box;box-shadow:inset 0 0 0 1px #fbfcfd;"></div>
<svg class="a" style="left:1309px;top:338px;" width="17" height="17" viewBox="0 0 17 17"><path d="M4.8 6.8H12.2L8.5 10.9Z" fill="#5a5a5a"/></svg>
<div class="a" style="left:1370px;top:338px;width:17px;height:17px;background:#f1f3f6;border:1px solid #a6acb3;box-sizing:border-box;box-shadow:inset 0 0 0 1px #fbfcfd;"></div>
<svg class="a" style="left:1370px;top:338px;" width="17" height="17" viewBox="0 0 17 17"><path d="M4.8 6.8H12.2L8.5 10.9Z" fill="#5a5a5a"/></svg>
<div class="a" style="left:1446px;top:338px;width:17px;height:17px;background:#f1f3f6;border:1px solid #a6acb3;box-sizing:border-box;box-shadow:inset 0 0 0 1px #fbfcfd;"></div>
<svg class="a" style="left:1446px;top:338px;" width="17" height="17" viewBox="0 0 17 17"><path d="M4.8 6.8H12.2L8.5 10.9Z" fill="#5a5a5a"/></svg>
<div class="a" style="left:1476px;top:338px;width:17px;height:17px;background:#f1f3f6;border:1px solid #a6acb3;box-sizing:border-box;box-shadow:inset 0 0 0 1px #fbfcfd;"></div>
<svg class="a" style="left:1476px;top:338px;" width="17" height="17" viewBox="0 0 17 17"><path d="M4.8 6.8H12.2L8.5 10.9Z" fill="#5a5a5a"/></svg>
<div class="a" style="left:1566px;top:338px;width:17px;height:17px;background:#f1f3f6;border:1px solid #a6acb3;box-sizing:border-box;box-shadow:inset 0 0 0 1px #fbfcfd;"></div>
<svg class="a" style="left:1566px;top:338px;" width="17" height="17" viewBox="0 0 17 17"><path d="M4.8 6.8H12.2L8.5 10.9Z" fill="#5a5a5a"/></svg>
<div class="a" style="left:1663px;top:338px;width:17px;height:17px;background:#f1f3f6;border:1px solid #a6acb3;box-sizing:border-box;box-shadow:inset 0 0 0 1px #fbfcfd;"></div>
<svg class="a" style="left:1663px;top:338px;" width="17" height="17" viewBox="0 0 17 17"><path d="M4.8 6.8H12.2L8.5 10.9Z" fill="#5a5a5a"/></svg>
<div class="a" style="left:1763px;top:338px;width:17px;height:17px;background:#f1f3f6;border:1px solid #a6acb3;box-sizing:border-box;box-shadow:inset 0 0 0 1px #fbfcfd;"></div>
<svg class="a" style="left:1763px;top:338px;" width="17" height="17" viewBox="0 0 17 17"><path d="M4.8 6.8H12.2L8.5 10.9Z" fill="#5a5a5a"/></svg>
<div class="a" style="left:1850px;top:338px;width:17px;height:17px;background:#f1f3f6;border:1px solid #a6acb3;box-sizing:border-box;box-shadow:inset 0 0 0 1px #fbfcfd;"></div>
<svg class="a" style="left:1850px;top:338px;" width="17" height="17" viewBox="0 0 17 17"><path d="M4.8 6.8H12.2L8.5 10.9Z" fill="#5a5a5a"/></svg>
<svg class="a" style="left:11px;top:241px;" width="12" height="12" viewBox="0 0 12 12"><path d="M12 0V12H0Z" fill="#b4b4b4"/></svg>
<div class="a" style="left:1880px;top:239px;width:15px;height:15px;background:#fff;border:1px solid #ababab;box-sizing:border-box;"></div>
<svg class="a" style="left:1880px;top:239px;" width="15" height="15" viewBox="0 0 15 15"><path d="M3.5 9H11.5L7.5 5Z" fill="#777"/></svg>
<div class="a" style="left:1880px;top:255px;width:15px;height:186px;background:#fff;border:1px solid #ababab;box-sizing:border-box;"></div>
<div class="a" style="left:1880px;top:444px;width:15px;height:15px;background:#fff;border:1px solid #ababab;box-sizing:border-box;"></div>
<svg class="a" style="left:1880px;top:444px;" width="15" height="15" viewBox="0 0 15 15"><path d="M3.5 6H11.5L7.5 10Z" fill="#777"/></svg>
<div class="a" style="left:1px;top:460px;width:1897px;height:27px;background:#e6e6e6;"></div>
<svg class="a" style="left:27px;top:468px;" width="8" height="10" viewBox="0 0 8 10"><path d="M5 1V9L1 5Z" fill="#c0c0c0"/></svg>
<svg class="a" style="left:55px;top:468px;" width="8" height="10" viewBox="0 0 8 10"><path d="M2 1V9L6 5Z" fill="#c0c0c0"/></svg>
<div class="a" style="left:101px;top:459px;width:65px;height:25px;background:#fff;border-left:1px solid #9b9b9b;border-right:1px solid #9b9b9b;box-sizing:border-box;"></div>
<div class="a" style="left:101px;top:482px;width:65px;height:2px;background:#217346;"></div>
<div class="a t" style="left:113.00px;top:453px;line-height:40px;font-size:12.5px;font-weight:700;color:#217346;transform:scaleX(0.9683);transform-origin:0 0;">Sheet1</div>
<svg class="a" style="left:199px;top:465px;" width="17" height="17" viewBox="0 0 17 17"><circle cx="8.5" cy="8.5" r="7.6" fill="none" stroke="#777" stroke-width="1.1"/><path d="M8.5 4.5V12.5M4.5 8.5H12.5" stroke="#555" stroke-width="1.6"/></svg>
<svg class="a" style="left:1138px;top:468px;" width="4" height="11" viewBox="0 0 4 11"><rect x="0.5" y="0" width="3" height="2" fill="#aaa"/><rect x="0.5" y="4" width="3" height="2" fill="#aaa"/><rect x="0.5" y="8" width="3" height="2" fill="#aaa"/></svg>
<div class="a" style="left:1156px;top:466px;width:718px;height:15px;background:#dadada;"></div>
<div class="a" style="left:1156px;top:466px;width:15px;height:15px;background:#fff;border:1px solid #ababab;box-sizing:border-box;"></div>
<svg class="a" style="left:1156px;top:466px;" width="15" height="15" viewBox="0 0 15 15"><path d="M9.5 3.5V11.5L5 7.5Z" fill="#666"/></svg>
<div class="a" style="left:1171px;top:466px;width:614px;height:15px;background:#fff;border:1px solid #ababab;box-sizing:border-box;"></div>
<div class="a" style="left:1859px;top:466px;width:15px;height:15px;background:#fff;border:1px solid #ababab;box-sizing:border-box;"></div>
<svg class="a" style="left:1859px;top:466px;" width="15" height="15" viewBox="0 0 15 15"><path d="M5.5 3.5V11.5L10 7.5Z" fill="#666"/></svg>
<div class="a" style="left:1px;top:487px;width:1897px;height:1px;background:#d0d0d0;"></div>
<div class="a" style="left:1px;top:488px;width:1897px;height:21px;background:#f0f0f0;"></div>
<div class="a t" style="left:8.00px;top:478px;line-height:40px;font-size:12px;font-weight:400;color:#444;transform:scaleX(0.9853);transform-origin:0 0;">Pronto</div>
<div class="a t" style="left:59.00px;top:478px;line-height:40px;font-size:12px;font-weight:400;color:#444;transform:scaleX(0.9542);transform-origin:0 0;">2 de 64 registros localizados.</div>
<div class="a" style="left:1595px;top:488px;width:38px;height:21px;background:#c6c6c6;"></div>
<svg class="a" style="left:1607px;top:491px;" width="14" height="13" viewBox="0 0 14 13"><g fill="none" stroke="#666" stroke-width="1"><rect x="0.5" y="0.5" width="12" height="12"/><path d="M4.5 0V13M8.5 0V13M0 4.5H13M0 8.5H13"/></g></svg>
<svg class="a" style="left:1645px;top:491px;" width="14" height="13" viewBox="0 0 14 13"><g fill="none" stroke="#666" stroke-width="1"><rect x="0.5" y="0.5" width="13" height="12"/><rect x="2.5" y="2.5" width="9" height="8"/><path d="M4 4.5H10M4 6.5H10M4 8.5H10"/></g></svg>
<svg class="a" style="left:1683px;top:491px;" width="14" height="13" viewBox="0 0 14 13"><g fill="none" stroke="#666" stroke-width="1"><rect x="0.5" y="0.5" width="13" height="12"/><path d="M0 7.5H9.5V0M4.5 0V7.5"/></g></svg>
<div class="a" style="left:1714px;top:497px;width:6px;height:2px;background:#666;"></div>
<div class="a" style="left:1724px;top:497px;width:100px;height:1px;background:#999;"></div>
<div class="a" style="left:1772px;top:492px;width:4px;height:11px;background:#666;"></div>
<svg class="a" style="left:1828px;top:493px;" width="9" height="9" viewBox="0 0 9 9"><path d="M4.5 0V9M0 4.5H9" stroke="#555" stroke-width="2"/></svg>
<div class="a t" style="left:1851.00px;top:478px;line-height:40px;font-size:12px;font-weight:400;color:#444;transform:scaleX(0.8700);transform-origin:0 0;">100%</div>
<div class="a" style="left:0px;top:58px;width:1px;height:452px;background:#217346;"></div>
<div class="a" style="left:1898px;top:58px;width:1px;height:452px;background:#217346;"></div>
<div class="a" style="left:0px;top:509px;width:1899px;height:1px;background:#217346;"></div>
<svg class="a" style="left:93px;top:170px;" width="9" height="6" viewBox="0 0 9 6"><path d="M0.5 0.5H8.5L4.5 5Z" fill="#707070"/></svg>
<svg class="a" style="left:121px;top:168px;" width="4" height="12" viewBox="0 0 4 12"><rect x="1" y="1" width="2" height="2" fill="#999"/><rect x="1" y="5" width="2" height="2" fill="#999"/><rect x="1" y="9" width="2" height="2" fill="#999"/></svg>
<svg class="a" style="left:151px;top:169px;" width="12" height="11" viewBox="0 0 12 11"><path d="M1 1L11 10M11 1L1 10" stroke="#c0c0c0" stroke-width="1.8"/></svg>
<svg class="a" style="left:186px;top:168px;" width="14" height="12" viewBox="0 0 14 12"><path d="M1 6.5L5 10.5L13 1.5" fill="none" stroke="#c8c8c8" stroke-width="2.4"/></svg>
<svg class="a" style="left:220px;top:164px;" width="20" height="20" viewBox="0 0 20 20"><text x="3.5" y="14" font-family="Liberation Serif" font-style="italic" font-weight="400" font-size="14" fill="#5a5a5a" transform="scale(1,1)">f<tspan font-size="11" dx="0.3">x</tspan></text></svg>
<svg class="a" style="left:1880px;top:169px;" width="9" height="6" viewBox="0 0 9 6"><path d="M1 5L4.5 1.5L8 5" fill="none" stroke="#666" stroke-width="1.5"/></svg>
<div class="a" style="left:104px;top:262px;width:9px;height:9px;background:#bab4d9;"></div>
<div class="a" style="left:104px;top:271px;width:9px;height:3px;background:#f0eff6;"></div>
<div class="a" style="left:113px;top:262px;width:10px;height:9px;background:#9ba3d3;"></div>
<div class="a" style="left:113px;top:271px;width:10px;height:3px;background:#e8e7f2;"></div>
<div class="a" style="left:123px;top:262px;width:10px;height:9px;background:#9b91c8;"></div>
<div class="a" style="left:123px;top:271px;width:10px;height:3px;background:#e9e6f1;"></div>
<div class="a" style="left:133px;top:262px;width:10px;height:9px;background:#a9a5cf;"></div>
<div class="a" style="left:133px;top:271px;width:10px;height:3px;background:#e2e2f0;"></div>
<div class="a" style="left:143px;top:262px;width:10px;height:9px;background:#9ea3d2;"></div>
<div class="a" style="left:143px;top:271px;width:10px;height:3px;background:#e8e7f2;"></div>
<div class="a" style="left:153px;top:262px;width:10px;height:9px;background:#cdc9e1;"></div>
<div class="a" style="left:153px;top:271px;width:10px;height:3px;background:#f1f0f6;"></div>
<div class="a" style="left:163px;top:262px;width:10px;height:9px;background:#9a98cb;"></div>
<div class="a" style="left:163px;top:271px;width:10px;height:3px;background:#eae9f3;"></div>
<div class="a" style="left:173px;top:262px;width:10px;height:9px;background:#a0a6d4;"></div>
<div class="a" style="left:173px;top:271px;width:10px;height:3px;background:#e6e4f1;"></div>
<div class="a" style="left:183px;top:262px;width:10px;height:9px;background:#9c95c8;"></div>
<div class="a" style="left:183px;top:271px;width:10px;height:3px;background:#e4e2f0;"></div>
<div class="a" style="left:193px;top:262px;width:10px;height:9px;background:#b1afd5;"></div>
<div class="a" style="left:193px;top:271px;width:10px;height:3px;background:#e6e4f1;"></div>
<div class="a" style="left:203px;top:262px;width:10px;height:9px;background:#9aa3d5;"></div>
<div class="a" style="left:203px;top:271px;width:10px;height:3px;background:#f3f2f8;"></div>
<div class="a" style="left:213px;top:262px;width:10px;height:9px;background:#a8a5d0;"></div>
<div class="a" style="left:213px;top:271px;width:10px;height:3px;background:#e1e1f0;"></div>
<div class="a" style="left:223px;top:262px;width:10px;height:9px;background:#a6a4d3;"></div>
<div class="a" style="left:223px;top:271px;width:10px;height:3px;background:#eceaf4;"></div>
<div class="a" style="left:233px;top:262px;width:10px;height:9px;background:#bfbadb;"></div>
<div class="a" style="left:233px;top:271px;width:10px;height:3px;background:#dedbed;"></div>
<div class="a" style="left:243px;top:262px;width:5px;height:9px;background:#aab4de;"></div>
<div class="a" style="left:243px;top:271px;width:5px;height:3px;background:#e3e5f3;"></div></body></html>
